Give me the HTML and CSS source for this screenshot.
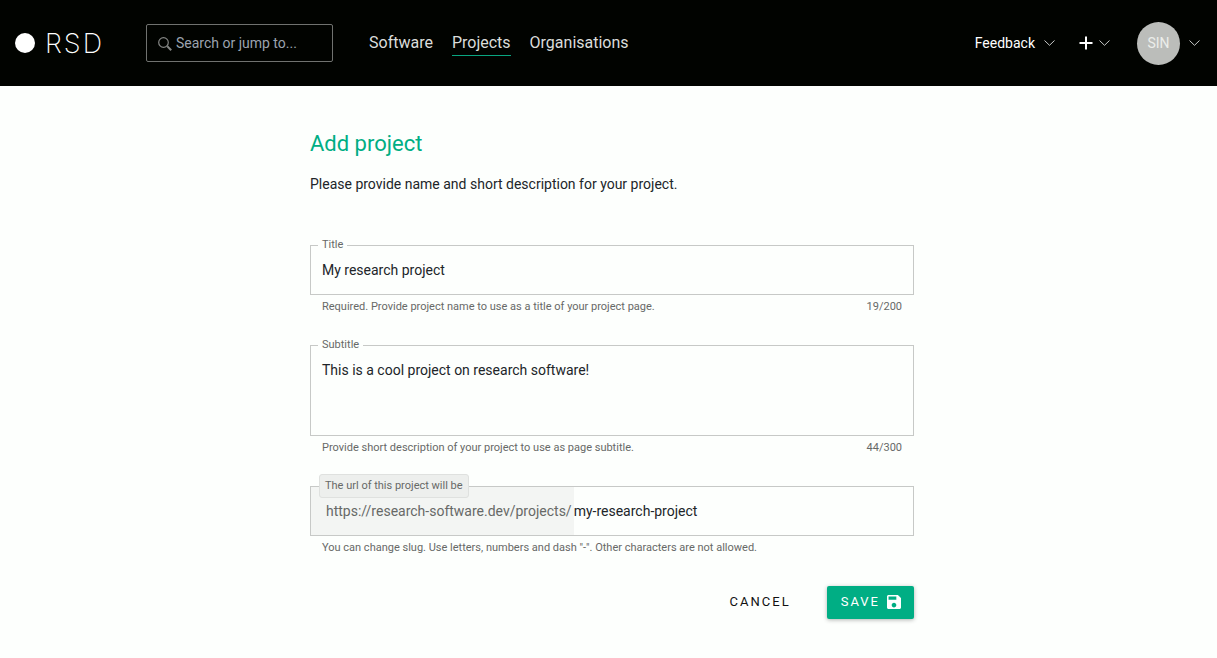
FILE: index.html
```html
<!DOCTYPE html>
<html lang="en">
<head>
<meta charset="utf-8">
<meta name="viewport" content="width=device-width, initial-scale=1">
<title>Add project | RSD</title>
<link rel="stylesheet" href="styles.css">
</head>
<body>
<header class="header">
  <a class="logo" href="#" aria-label="RSD home"><span class="logo-dot"></span><span class="logo-text">RSD</span></a>
  <label class="search">
    <svg class="search-icon" viewBox="0 0 14 14" aria-hidden="true"><circle cx="5.5" cy="5.5" r="4.8"/><path class="handle" d="M9.3 9.3l3.900 3.900"/></svg>
    <input class="search-input" type="text" placeholder="Search or jump to..." aria-label="Search or jump to">
  </label>
  <nav class="nav">
    <a class="nav-link" href="#">Software</a>
    <a class="nav-link nav-link-active" href="#">Projects</a>
    <a class="nav-link" href="#">Organisations</a>
  </nav>
  <div class="actions">
    <button class="action" type="button">Feedback
      <svg class="chevron" viewBox="0 0 11 6" aria-hidden="true"><path d="M.5 .5L5.500 5.300L10.500 .5"/></svg>
    </button>
    <button class="action action-add" type="button" aria-label="Add">
      <svg class="plus" viewBox="0 0 14 14" aria-hidden="true"><path d="M7 .5v13M.5 7h13"/></svg>
      <svg class="chevron" viewBox="0 0 11 6" aria-hidden="true"><path d="M.5 .5L5.500 5.300L10.500 .5"/></svg>
    </button>
    <button class="action action-user" type="button" aria-label="User menu">
      <span class="avatar">SIN</span>
      <svg class="chevron" viewBox="0 0 11 6" aria-hidden="true"><path d="M.5 .5L5.500 5.300L10.500 .5"/></svg>
    </button>
  </div>
</header>
<main class="main">
  <form class="form">
    <h1 class="title">Add project</h1>
    <p class="intro">Please provide name and short description for your project.</p>
    <div class="field">
      <div class="box">
        <label class="label" for="title">Title</label>
        <input class="control" id="title" type="text" value="My research project">
      </div>
      <div class="help"><span>Required. Provide project name to use as a title of your project page.</span><span>19/200</span></div>
    </div>
    <div class="field">
      <div class="box">
        <label class="label" for="subtitle">Subtitle</label>
        <textarea class="control control-area" id="subtitle" rows="4">This is a cool project on research software!</textarea>
      </div>
      <div class="help"><span>Provide short description of your project to use as page subtitle.</span><span>44/300</span></div>
    </div>
    <div class="field">
      <div class="box box-url">
        <label class="label label-chip" for="slug">The url of this project will be</label>
        <span class="prefix">https://research-software.dev/projects/</span>
        <input class="control control-slug" id="slug" type="text" value="my-research-project">
      </div>
      <div class="help"><span>You can change slug. Use letters, numbers and dash "-". Other characters are not allowed.</span></div>
    </div>
    <div class="buttons">
      <button class="button" type="button">CANCEL</button>
      <button class="button button-save" type="submit">SAVE
        <svg class="save-icon" viewBox="3 3 18 18" aria-hidden="true"><path d="M17 3H5c-1.110 0-2 .9-2 2v14c0 1.100.89 2 2 2h14c1.100 0 2-.9 2-2V7l-4-4zm-5 16c-1.660 0-3-1.340-3-3s1.340-3 3-3 3 1.340 3 3-1.340 3-3 3zm3-10H5V5h10v4z"/></svg>
      </button>
    </div>
  </form>
</main>
</body>
</html>
```

FILE: styles.css
```css
* { box-sizing: border-box; }

body {
  margin: 0;
  background: #fdfffd;
  color: #212529;
  font-family: Roboto, "Liberation Sans", sans-serif;
  font-size: 14px;
  line-height: 20px;
}

button, input, textarea { font: inherit; color: inherit; }

button {
  display: flex;
  align-items: center;
  border: 0;
  background: none;
  padding: 0;
  cursor: pointer;
}

.header {
  display: flex;
  align-items: center;
  min-height: 86px;
  padding: 0 17px 0 15px;
  background: #010300;
  color: #fff;
}

.logo {
  display: flex;
  align-items: center;
  gap: 10px;
  width: 131px;
  color: #fff;
  text-decoration: none;
}

.logo-dot {
  width: 20px;
  height: 20px;
  border-radius: 50%;
  background: #fff;
}

.logo-text {
  padding-top: 1px;
  font-family: Inter, sans-serif;
  font-size: 27px;
  font-weight: 200;
  line-height: 32px;
  letter-spacing: 2px;
}

.search {
  display: flex;
  align-items: center;
  gap: 4px;
  width: 187px;
  height: 38px;
  padding: 0 11px;
  border: 1px solid #70726f;
  border-radius: 2px;
}

.search-icon {
  flex: none;
  width: 14px;
  height: 14px;
  margin-top: 2px;
  fill: none;
  stroke: #858784;
  stroke-width: 1.2;
}

.handle { stroke-width: 2; }

.search-input {
  width: 100%;
  min-width: 0;
  padding: 0;
  border: 0;
  outline: 0;
  background: none;
}

.search-input::placeholder { color: #9ca3af; opacity: 1; }

.nav {
  display: flex;
  gap: 19px;
  margin-left: 36px;
  font-size: 16px;
}

.nav-link {
  padding: 2px 0 1px;
  border-bottom: 1px solid transparent;
  color: #dbdddb;
  line-height: 22px;
  text-decoration: none;
}

.nav-link-active { border-color: #09a580; }

.actions {
  display: flex;
  align-items: center;
  margin-left: auto;
}

.action { gap: 9px; color: #fff; }
.action-add { gap: 6px; margin-left: 24px; }
.action-user { margin-left: 27px; }

.chevron {
  width: 11px;
  height: 6px;
  fill: none;
  stroke: #c8cac8;
}

.plus {
  width: 14px;
  height: 14px;
  fill: none;
  stroke: #fff;
  stroke-width: 2;
}

.avatar {
  display: flex;
  align-items: center;
  justify-content: center;
  width: 43px;
  height: 43px;
  border-radius: 50%;
  background: #bbbdba;
  color: #eceeeb;
}

.main {
  max-width: 611px;
  margin: 0 auto;
  padding: 42px 0 38px 7px;
}

.title {
  margin: 0;
  color: #00ae84;
  font-size: 22px;
  font-weight: 400;
  line-height: 32px;
}

.intro { margin: 14px 0 51px; }

.field { margin-bottom: 31px; }

.box {
  position: relative;
  display: flex;
  border: 1px solid #c7c9c7;
}

.label {
  position: absolute;
  top: -8px;
  left: 7px;
  padding: 0 4px;
  background: #fdfffd;
  color: #676967;
  font-size: 11px;
  line-height: 14px;
}

.label-chip {
  top: -13px;
  left: 8px;
  padding: 4px 5px;
  border: 1px solid #dfe1df;
  border-radius: 3px;
  background: #edefed;
}

.control {
  display: block;
  flex: 1;
  min-width: 0;
  padding: 14px 11px;
  border: 0;
  outline: 0;
  background: none;
  resize: none;
}

input.control { height: 48px; }

.control-area { height: 89px; }

.prefix {
  padding: 14px 2px 14px 15px;
  background: #f3f5f3;
  color: #676967;
}

.control-slug { padding-left: 0; }

.help {
  display: flex;
  justify-content: space-between;
  padding: 5px 12px 0;
  color: #676967;
  font-size: 11px;
  line-height: 14px;
}

.buttons {
  display: flex;
  justify-content: flex-end;
  gap: 22px;
}

.button {
  min-height: 33px;
  padding: 0 14px 1px;
  border-radius: 2px;
  color: #111;
  font-size: 13px;
  letter-spacing: 2px;
}

.button-save {
  gap: 7px;
  padding: 0 13px 1px 14px;
  background: #00ae84;
  box-shadow: 0 1px 4px rgba(0, 0, 0, .3);
  color: #fff;
}

.save-icon {
  width: 14px;
  height: 14px;
  fill: #fff;
}
```
